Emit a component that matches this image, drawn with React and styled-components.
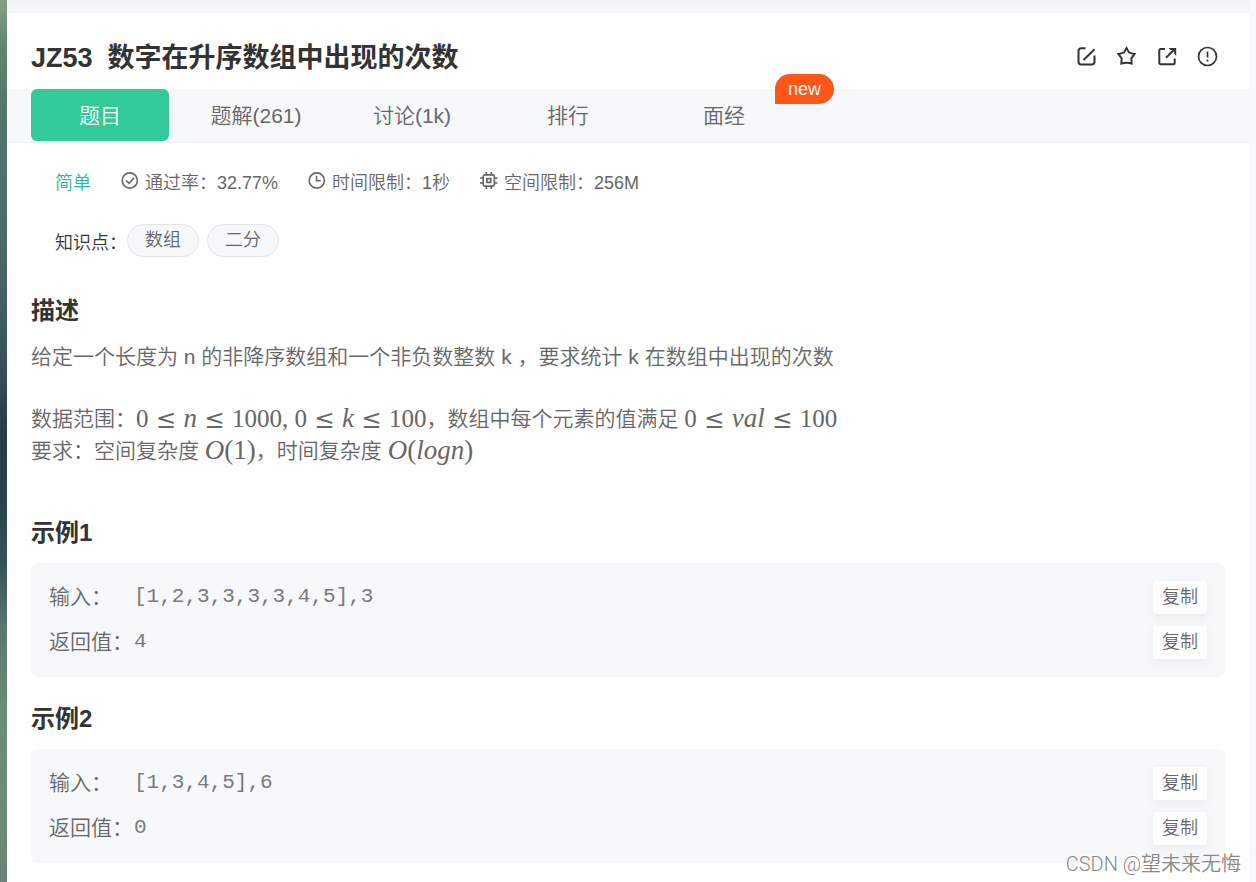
import styled, { createGlobalStyle } from "styled-components";

const GlobalStyle = createGlobalStyle`
    *{
        box-sizing:border-box;
    }
    body{
        margin:0;
        background:#f7f8fa;
        color:#666;
        font-family:"Liberation Sans", "Noto Sans CJK SC", sans-serif;
        font-weight:350;
    }
    h1, h2, p, dl, dd{
        margin:0;
    }
    button{
        font:inherit;
        color:inherit;
        border:0;
        padding:0;
        cursor:pointer;
    }
`
const Page = styled.div`
    position:relative;
    display:flex;
    min-height:100vh;
    padding-right:7px;
`
const Wallpaper = styled.div`
    width:7px;
    flex:none;
    background:linear-gradient(#869f83 0%, #5d8873 5%, #507769 12%, #4d706d 22%, #47656a 31%, #3a505a 41%, #283c47 49%, #2c434c 57%, #37505a 64%, #57776f 71%, #678c79 80%, #6a8d79 90%, #6d8379 100%);
`
const Main = styled.main`
    flex:1;
    min-width:0;
    display:flex;
    flex-direction:column;
    background:white;
`
const TopStrip = styled.div`
    height:13px;
    background:linear-gradient(#f2f3f5, #f6f7f9);
`
const Header = styled.header`
    display:flex;
    align-items:center;
    justify-content:space-between;
    height:76px;
    padding:0 31px 0 24px;
`
const Title = styled.h1`
    display:flex;
    gap:15px;
    padding-top:14px;
    color:#333;
    font-size:27px;
    line-height:36px;
    font-weight:700;
`
const Actions = styled.div`
    display:flex;
    gap:18px;
    padding-top:12px;
`
const ActionButton = styled.button`
    display:flex;
    width:22px;
    height:22px;
    color:#333;
    background:none;
`
const Tabs = styled.nav`
    display:flex;
    gap:18px;
    height:54px;
    padding:0 24px;
    background:#f7f8fa;
    border-bottom:1px solid #f0f1f3;
`
const Tab = styled.a`
    position:relative;
    width:138px;
    height:52px;
    border-radius:6px;
    text-align:center;
    text-decoration:none;
    font-size:21px;
    line-height:54px;
    color:${({ $active }) => ($active ? "white" : "#666")};
    background:${({ $active }) => ($active ? "#32ca99" : "transparent")};
`
const Badge = styled.span`
    position:absolute;
    left:120px;
    top:-15px;
    width:59px;
    height:30px;
    border-radius:15px 15px 15px 0;
    background:#ff5519;
    color:white;
    font-size:18px;
    line-height:30px;
`
const Info = styled.section`
    display:flex;
    flex-direction:column;
    gap:29px;
    padding:28px 48px 0;
    font-size:18px;
    line-height:24px;
`
const MetaRow = styled.div`
    display:flex;
    gap:30px;
`
const Level = styled.span`
    color:#25bb9b;
`
const Meta = styled.span`
    display:flex;
    gap:6px;
`
const TagRow = styled.div`
    display:flex;
    align-items:center;
    color:#333;
`
const TagLabel = styled.span`
    padding-top:4px;
`
const TagList = styled.div`
    display:flex;
    gap:8px;
`
const Tag = styled.a`
    padding:0 17px;
    border:1px solid #e3e4e6;
    border-radius:17px;
    background:#f7f8fa;
    color:#666;
    line-height:31px;
    text-decoration:none;
`
const Article = styled.article`
    padding:36px 24px 19px;
    font-size:21px;
    line-height:32px;
`
const Heading = styled.h2`
    margin-bottom:12px;
    color:#333;
    font-size:24px;
    line-height:36px;
    font-weight:700;
`
const Paragraph = styled.p`
    margin-bottom:30px;
`
const Limits = styled.p`
    margin-bottom:48px;
`
const Formula = styled.span`
    display:inline-block;
    height:32px;
    vertical-align:top;
    font-family:"Liberation Serif", serif;
    font-size:${({ $big }) => ($big ? "27px" : "25px")};
    line-height:${({ $big }) => ($big ? "30px" : "31px")};
    i{
        font-size:27px;
    }
`
const Relation = styled.span`
    display:inline-block;
    width:35px;
    text-align:center;
    font-family:"DejaVu Math TeX Gyre", "DejaVu Sans", sans-serif;
    font-size:24px;
    line-height:24px;
    font-weight:200;
`
const Example = styled.section`
    margin-bottom:24px;
    &:last-child{
        margin-bottom:0;
    }
`
const ExampleBox = styled.dl`
    display:flex;
    flex-direction:column;
    gap:12px;
    padding:18px;
    border-radius:6px;
    background:#f7f8fa;
`
const ExampleRow = styled.div`
    display:flex;
    align-items:flex-start;
    line-height:31px;
`
const ExampleLabel = styled.dt`
    width:85px;
`
const ExampleValue = styled.dd`
    flex:1;
    color:#7a7a7a;
    font-family:"Liberation Mono", monospace;
`
const CopyButton = styled.button`
    width:54px;
    height:33px;
    padding-bottom:2px;
    border-radius:3px;
    background:white;
    box-shadow:0 3px 9px rgba(0, 0, 0, 0.06);
    font-size:18px;
    line-height:30px;
`
const Signature = styled.span`
    position:absolute;
    right:15px;
    bottom:4px;
    color:#888;
    font-family:Roboto, "Noto Sans CJK SC", sans-serif;
    font-size:20px;
    line-height:28px;
    font-weight:350;
    text-shadow:-1px -1px 0 white;
`

const Icon = ({ size, width = 2, children }) => (
    <svg width={size} height={size} viewBox={`0 0 ${size} ${size}`} fill="none" stroke="currentColor" strokeWidth={width} aria-hidden="true">
        {children}
    </svg>
)

const EditIcon = () => (
    <Icon size={22}>
        <path d="M9.5 2.2H5.2a2.7 2.7 0 0 0-2.7 2.7v10.8a2.7 2.7 0 0 0 2.7 2.7h10.6a2.7 2.7 0 0 0 2.7-2.7V9.5M7.5 14 18.6 3.2" />
    </Icon>
)
const StarIcon = () => (
    <Icon size={22} width={1.9}>
        <path d="M10.5 2l2.4 4.4q2.6 1.3 5.7 1.5-1.6 2.4-3.3 4.4.3 3 .4 5.4-5.2-2-10.4 0 .1-2.4.4-5.4Q4 10.300 2.400 7.900q3.100-.2 5.700-1.500z" />
    </Icon>
)
const ShareIcon = () => (
    <Icon size={22}>
        <path d="M9 3H4.600a1.300 1.300 0 0 0-1.300 1.300v12.600a1.300 1.300 0 0 0 1.300 1.300h12.800a1.300 1.300 0 0 0 1.300-1.300V12.500M10 11.800l8-8" />
        <path d="M12.500 2h7.700v7.700l-2-2V4h-3.700z" fill="currentColor" stroke="none" />
    </Icon>
)
const TipIcon = () => (
    <Icon size={22} width={1.7}>
        <circle cx="11.5" cy="10.500" r="9" />
        <path d="M11.500 5.500v6M11.500 13.500v2" />
    </Icon>
)
const PassIcon = () => (
    <Icon size={18} width={1.6}>
        <circle cx="8.8" cy="9.5" r="7.6" />
        <path d="M5 9.5l3 2.8 5-5.3" />
    </Icon>
)
const ClockIcon = () => (
    <Icon size={18} width={1.6}>
        <circle cx="8.8" cy="9.5" r="7.6" />
        <path d="M8.5 4.8v4.9h4.2" />
    </Icon>
)
const ChipIcon = () => (
    <Icon size={18} width={1.7}>
        <rect x="3.2" y="3.9" width="11.2" height="11.2" rx="1.5" />
        <rect x="6.9" y="7.6" width="3.8" height="3.8" />
        <path d="M6.3 1v3M11.3 1v3M6.3 15v3M11.3 15v3M0 7h3M0 12h3M14.5 7h3M14.5 12h3" />
    </Icon>
)

const actions = [
    { label: "编辑", Image: EditIcon },
    { label: "收藏", Image: StarIcon },
    { label: "分享", Image: ShareIcon },
    { label: "提示", Image: TipIcon },
]

const tabs = [
    { name: "题目", active: true },
    { name: "题解(261)" },
    { name: "讨论(1k)" },
    { name: "排行" },
    { name: "面经", badge: "new" },
]

const metas = [
    { Image: PassIcon, text: "通过率：32.77%" },
    { Image: ClockIcon, text: "时间限制：1秒" },
    { Image: ChipIcon, text: "空间限制：256M" },
]

const examples = [
    { name: "示例1", input: "[1,2,3,3,3,3,4,5],3", output: "4" },
    { name: "示例2", input: "[1,3,4,5],6", output: "0" },
]

const Le = () => <Relation>≤</Relation>

const App = () => {
    return (
        <>
            <GlobalStyle />
            <Page>
                <Wallpaper />
                <Main>
                    <TopStrip />
                    <Header>
                        <Title>
                            <span>JZ53</span>
                            <span>数字在升序数组中出现的次数</span>
                        </Title>
                        <Actions>
                            {actions.map(({ label, Image }) =>
                                <ActionButton key={label} aria-label={label}>
                                    <Image />
                                </ActionButton>)}
                        </Actions>
                    </Header>
                    <Tabs>
                        {tabs.map(tab =>
                            <Tab key={tab.name} href="#" $active={tab.active}>
                                {tab.name}
                                {tab.badge && <Badge>{tab.badge}</Badge>}
                            </Tab>)}
                    </Tabs>
                    <Info>
                        <MetaRow>
                            <Level>简单</Level>
                            {metas.map(({ Image, text }) =>
                                <Meta key={text}>
                                    <Image />
                                    <span>{text}</span>
                                </Meta>)}
                        </MetaRow>
                        <TagRow>
                            <TagLabel>知识点：</TagLabel>
                            <TagList>
                                <Tag href="#">数组</Tag>
                                <Tag href="#">二分</Tag>
                            </TagList>
                        </TagRow>
                    </Info>
                    <Article>
                        <Heading>描述</Heading>
                        <Paragraph>给定一个长度为 n 的非降序数组和一个非负数整数 k ，要求统计 k 在数组中出现的次数</Paragraph>
                        <Limits>
                            数据范围：<Formula>0<Le /><i>n</i><Le />1000, 0<Le /><i>k</i><Le />100</Formula>，数组中每个元素的值满足 <Formula>0<Le /><i>val</i><Le />100</Formula>
                            <br />
                            要求：空间复杂度 <Formula $big><i>O</i>(1)</Formula>，时间复杂度 <Formula $big><i>O</i>(<i>logn</i>)</Formula>
                        </Limits>
                        {examples.map(example =>
                            <Example key={example.name}>
                                <Heading>{example.name}</Heading>
                                <ExampleBox>
                                    <ExampleRow>
                                        <ExampleLabel>输入：</ExampleLabel>
                                        <ExampleValue>{example.input}</ExampleValue>
                                        <CopyButton>复制</CopyButton>
                                    </ExampleRow>
                                    <ExampleRow>
                                        <ExampleLabel>返回值：</ExampleLabel>
                                        <ExampleValue>{example.output}</ExampleValue>
                                        <CopyButton>复制</CopyButton>
                                    </ExampleRow>
                                </ExampleBox>
                            </Example>)}
                    </Article>
                </Main>
                <Signature>CSDN @望未来无悔</Signature>
            </Page>
        </>
    )
}
export default App
